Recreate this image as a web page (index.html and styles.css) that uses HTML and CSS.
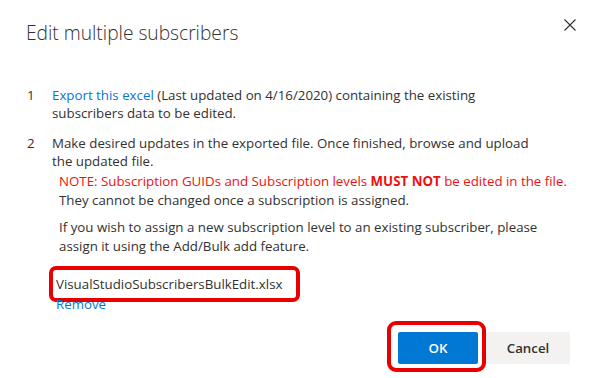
FILE: index.html
```html
<!DOCTYPE html>
<html lang="en">
<head>
<meta charset="utf-8">
<title>Edit multiple subscribers</title>
<link rel="stylesheet" href="styles.css">
</head>
<body>
<div class="dialog">
  <div class="header">
    <h1 class="title">Edit multiple subscribers</h1>
    <button class="close" aria-label="Close">
      <svg width="12" height="12" viewBox="0 0 12 12"><path d="M0.5 0.5 L11.5 11.5 M11.5 0.5 L0.5 11.5" stroke="#323130" stroke-width="1.1" fill="none"/></svg>
    </button>
  </div>
  <div class="content">
    <div class="step">
      <div class="num">1</div>
      <p class="text"><a class="link" href="#">Export this excel</a> (Last updated on 4/16/2020) containing the existing subscribers data to be edited.</p>
    </div>
    <div class="step step-2">
      <div class="num">2</div>
      <div class="text">
        <div>Make desired updates in the exported file. Once finished, browse and upload the updated file.</div>
        <div class="notes">
          <p class="note"><span class="warn">NOTE: Subscription GUIDs and Subscription levels <b>MUST NOT</b> be edited in the file.</span><br>They cannot be changed once a subscription is assigned.</p>
          <p class="note">If you wish to assign a new subscription level to an existing subscriber, please assign it using the Add/Bulk add feature.</p>
        </div>
      </div>
    </div>
    <div class="file">
      <div class="file-name">VisualStudioSubscribersBulkEdit.xlsx</div>
      <a class="remove" href="#">Remove</a>
    </div>
  </div>
  <div class="footer">
    <div class="highlight">
      <button class="btn btn-primary">OK</button>
    </div>
    <button class="btn btn-default">Cancel</button>
  </div>
</div>
</body>
</html>
```

FILE: styles.css
```css
* { box-sizing: border-box; }
html, body { margin: 0; padding: 0; background: #fff; }
body {
  font-family: "Open Sans", "Noto Sans", sans-serif;
  color: #323130;
  width: 592px;
  height: 378px;
  overflow: hidden;
}
.dialog { width: 592px; height: 378px; display: flex; flex-direction: column; }
.header {
  display: flex;
  justify-content: space-between;
  align-items: flex-start;
  padding: 19px 16px 0 26px;
}
.title {
  margin: 0;
  font-size: 19.2px;
  font-weight: 300;
  line-height: 28px;
  color: #323130;
}
.close {
  border: 0;
  background: none;
  padding: 0;
  width: 12px;
  height: 12px;
  display: block;
  cursor: pointer;
}
.close svg { display: block; }
.content {
  padding: 39px 26px 0 27px;
  font-size: 13.3px;
  line-height: 18px;
}
.step { display: flex; }
.step-2 { margin-top: 12px; }
.num { width: 25px; flex: none; }
.text { flex: 1; padding-right: 31px; margin: 0; }
.link, .remove { color: #0078d4; text-decoration: none; }
.notes { padding-left: 7px; margin-right: -38px; }
.note { margin: 2px 0 0; line-height: 18.5px; }
.note + .note { margin-top: 9px; }
.warn { color: #f01010; }
.warn b { font-weight: 700; }
.file { margin: 11px 0 0 22px; }
.file-name {
  display: inline-block;
  border: 4px solid #e80000;
  border-radius: 7px;
  padding: 4px 14px 4px 3px;
  line-height: 20px;
}
.remove { display: block; margin-top: -6px; padding-left: 7px; line-height: 16px; width: max-content; }
.footer {
  margin-top: auto;
  display: flex;
  justify-content: flex-end;
  align-items: flex-start;
  padding: 0 22px 6px 0;
}
.highlight {
  border: 4px solid #e80000;
  border-radius: 9px;
  padding: 7px 4px 4px 7px;
}
.btn {
  font-family: inherit;
  font-size: 13.3px;
  font-weight: 600;
  height: 32px;
  border: 0;
  border-radius: 2px;
  padding: 0;
  cursor: pointer;
}
.btn-primary { width: 80px; background: #0078d4; color: #fff; }
.btn-default { width: 84px; background: #f3f2f1; color: #323130; margin-top: 11px; }
```
